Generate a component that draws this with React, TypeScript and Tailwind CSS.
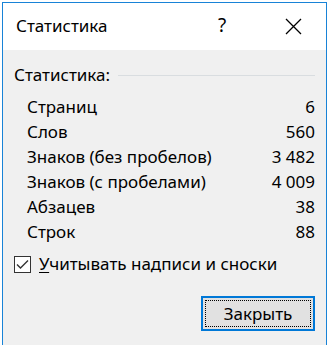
import { useState } from 'react';

const stats = [
  { label: 'Страниц', value: '6' },
  { label: 'Слов', value: '560' },
  { label: 'Знаков (без пробелов)', value: '3 482' },
  { label: 'Знаков (с пробелами)', value: '4 009' },
  { label: 'Абзацев', value: '38' },
  { label: 'Строк', value: '88' },
];

export default function App() {
  const [withNotes, setWithNotes] = useState(true);

  return (
    <div
      className="w-[329px] h-[345px] overflow-hidden bg-white pl-[2px] pr-[2px] pt-[2px] text-[#000] text-[17px] leading-[22px]"
      style={{ fontFamily: '"Noto Sans", "Open Sans", sans-serif' }}
    >
      <div className="h-full flex flex-col border border-b-0 border-[#1883d7]">
        {/* Title bar */}
        <div className="h-[47px] bg-white flex items-center pl-[13px]">
          <span className="text-[17px] flex-1 -mt-[2px]">Статистика</span>
          <span className="w-[14px] text-center text-[19px] mr-[56px] -mt-[3px]">?</span>
          <svg width="17" height="17" viewBox="0 0 17 17" className="mr-[24px] -mt-[1px]">
            <path d="M1 1 L16 16 M16 1 L1 16" stroke="#000" strokeWidth="1.3" fill="none" />
          </svg>
        </div>

        {/* Body */}
        <div className="flex-1 bg-[#f0f0f0] px-[11px] pt-[14px]">
          <div className="flex items-center gap-[8px]">
            <span>Статистика:</span>
            <div className="flex-1 h-px bg-[#d9dde0] mt-[1px]" />
          </div>

          <div className="pl-[13px] pt-[8px] flex flex-col">
            {stats.map((s) => (
              <div key={s.label} className="flex justify-between h-[25px] items-center">
                <span>{s.label}</span>
                <span>{s.value}</span>
              </div>
            ))}
          </div>

          <label className="flex items-center gap-[8px] mt-[9px] cursor-default">
            <button
              type="button"
              onClick={() => setWithNotes(!withNotes)}
              className="w-[17px] h-[17px] border border-[#333] bg-white flex items-center justify-center"
            >
              {withNotes && (
                <svg width="13" height="11" viewBox="0 0 13 11">
                  <path d="M1 5.5 L4.5 9 L12 1.5" stroke="#333" strokeWidth="1.4" fill="none" />
                </svg>
              )}
            </button>
            <span>
              <span className="underline underline-offset-2">У</span>читывать надписи и сноски
            </span>
          </label>

          <div className="flex justify-end mt-[21px]">
            <button
              type="button"
              className="w-[114px] h-[35px] border-2 border-[#0078d7] bg-[#e1e1e1] p-[2px]"
            >
              <div className="w-full h-full border border-dotted border-[#000] flex items-center justify-center">
                Закрыть
              </div>
            </button>
          </div>
        </div>
      </div>
    </div>
  );
}
